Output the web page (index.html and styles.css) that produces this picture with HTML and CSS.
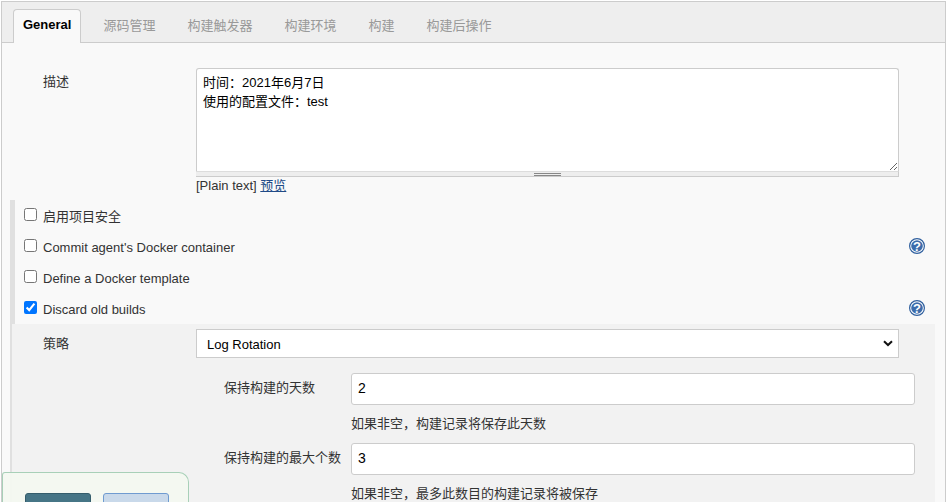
FILE: index.html
```html
<!DOCTYPE html>
<html lang="zh-CN">
<head>
<meta charset="utf-8">
<title>General</title>
<link rel="stylesheet" href="styles.css">
</head>
<body>
<div class="panel">
  <nav class="tabs">
    <a class="tab active">General</a>
    <a class="tab">源码管理</a>
    <a class="tab">构建触发器</a>
    <a class="tab">构建环境</a>
    <a class="tab">构建</a>
    <a class="tab">构建后操作</a>
  </nav>
  <div class="content">
    <div class="desc-row">
      <div class="label desc-label">描述</div>
      <div class="desc-field">
        <textarea class="desc-text">时间：2021年6月7日
使用的配置文件：test</textarea>
        <div class="grip"><span class="grip-mark"></span></div>
        <div class="format">[Plain text] <a class="preview">预览</a></div>
      </div>
    </div>
    <div class="section">
      <div class="check-row"><label class="check check-cjk"><input type="checkbox"><span>启用项目安全</span></label></div>
      <div class="check-row"><label class="check"><input type="checkbox"><span>Commit agent's Docker container</span></label>
        <svg class="help" viewBox="0 0 16 16"><circle cx="8" cy="8" r="7.4" fill="#fff" stroke="#2f5f9e" stroke-width="1.2"/><circle cx="8" cy="8" r="5.8" fill="#3c6cab"/><text x="8" y="12.5" class="help-q">?</text></svg>
      </div>
      <div class="check-row"><label class="check"><input type="checkbox"><span>Define a Docker template</span></label></div>
      <div class="check-row"><label class="check"><input type="checkbox" checked><span>Discard old builds</span></label>
        <svg class="help" viewBox="0 0 16 16"><circle cx="8" cy="8" r="7.4" fill="#fff" stroke="#2f5f9e" stroke-width="1.2"/><circle cx="8" cy="8" r="5.8" fill="#3c6cab"/><text x="8" y="12.5" class="help-q">?</text></svg>
      </div>
      <div class="nested">
        <div class="strategy-row">
          <div class="label strategy-label">策略</div>
          <div class="select-box">Log Rotation
            <svg class="chevron" viewBox="0 0 10 7"><path d="M1 1.2 5 5 9 1.2" fill="none" stroke="#111" stroke-width="2"/></svg>
          </div>
        </div>
        <div class="field-row">
          <div class="field-label">保持构建的天数</div>
          <div class="field-body">
            <div class="text-input">2</div>
            <div class="hint">如果非空，构建记录将保存此天数</div>
          </div>
        </div>
        <div class="field-row">
          <div class="field-label">保持构建的最大个数</div>
          <div class="field-body">
            <div class="text-input">3</div>
            <div class="hint">如果非空，最多此数目的构建记录将被保存</div>
          </div>
        </div>
      </div>
    </div>
  </div>
  <div class="footer">
    <button class="btn btn-save"></button>
    <button class="btn btn-apply"></button>
  </div>
</div>
</body>
</html>
```
FILE: styles.css
```css
* { box-sizing: border-box; }
html, body { margin: 0; height: 502px; overflow: hidden; background: #fff; }
body {
  font-family: "Liberation Sans", "Noto Sans CJK SC", sans-serif;
  font-size: 13px;
  color: #333;
}
.panel {
  position: relative;
  height: 501px;
  margin: 1px 1px 0 1px;
  border: 1px solid #ccc;
  border-bottom: 0;
  background: #f9f9f9;
  overflow: hidden;
}
.tabs {
  display: flex;
  align-items: flex-end;
  height: 41px;
  padding-left: 11px;
  background: #eee;
  border-bottom: 1px solid #ccc;
}
.tab {
  height: 30px;
  line-height: 28px;
  padding: 0 16px;
  color: #999;
  white-space: nowrap;
}
.tab.active {
  height: 34px;
  margin-right: 6px;
  margin-bottom: -1px;
  line-height: 30px;
  padding: 0 9px;
  color: #000;
  font-weight: 700;
  background: #f9f9f9;
  border: 1px solid #ccc;
  border-bottom: 0;
  border-radius: 4px 4px 0 0;
}
.content { padding: 25px 10px 0 8px; }
.desc-row { display: flex; padding-right: 36px; }
.label { color: #333; }
.desc-label { width: 186px; padding: 3px 0 0 33px; }
.desc-field { flex: 1; }
.desc-text {
  display: block;
  width: 100%;
  height: 103px;
  padding: 4px 6px;
  font: inherit;
  line-height: 19px;
  color: #000;
  background: #fff;
  border: 1px solid #ccc;
  border-bottom: 0;
  border-radius: 3px 3px 0 0;
  resize: vertical;
  outline: none;
}
.grip {
  display: flex;
  justify-content: center;
  align-items: center;
  height: 6px;
  background: #eee;
  border: 1px solid #ccc;
  border-top-color: #ddd;
  border-left: 0;
}
.grip-mark {
  width: 27px;
  height: 3px;
  border-top: 1px solid #888;
  border-bottom: 1px solid #888;
}
.format { margin-top: 1px; line-height: 16px; }
.preview { color: #204a87; text-decoration: underline; }
.section {
  margin-top: 6px;
  border-left: 5px solid #e0e0e0;
}
.check-row {
  display: flex;
  justify-content: space-between;
  align-items: center;
  height: 31px;
  padding: 0 10px 0 9px;
}
.check { display: flex; align-items: center; gap: 6px; }
.check input { width: 13px; height: 13px; margin: 0 0 2px; }
.check span { padding-top: 2px; }
.check-cjk span { padding-top: 0; }
.help { width: 16px; height: 16px; margin-top: -1px; }
.help-q {
  font-size: 13px;
  font-weight: 700;
  fill: #fff;
  text-anchor: middle;
}
.nested {
  margin-left: -3px;
  padding: 0 20px 0 32px;
  background: #f2f2f2;
  height: 200px;
}
.strategy-row { display: flex; padding-top: 5px; }
.strategy-label { width: 153px; padding: 4px 0 0 0; margin-left: -1px; }
.select-box {
  position: relative;
  width: 703px;
  height: 29px;
  line-height: 29px;
  padding-left: 10px;
  color: #000;
  background: #fff;
  border: 1px solid #ccc;
}
.chevron { position: absolute; right: 5px; top: 10px; width: 10px; height: 7px; }
.field-row { display: flex; margin-top: 15px; }
.field-row + .field-row { margin-top: 0; }
.field-label {
  width: 307px;
  padding: 4px 0 0 180px;
  white-space: nowrap;
}
.field-body { flex: 1; }
.text-input {
  height: 32px;
  line-height: 28px;
  padding-left: 6px;
  color: #000;
  font-size: 14px;
  background: #fff;
  border: 1px solid #ccc;
  border-radius: 3px;
}
.hint { height: 38px; padding-top: 8px; color: #333; }
.footer {
  position: absolute;
  left: 0;
  bottom: 0;
  width: 187px;
  height: 30px;
  padding: 20px 0 0 22px;
  display: flex;
  gap: 12px;
  background: rgba(244, 248, 241, 0.92);
  border: 1px solid #a8d0b8;
  border-bottom: 0;
  border-radius: 3px 10px 0 0;
}
.btn { width: 66px; height: 30px; padding: 0; border-radius: 3px; flex: none; }
.btn-save { background: #467586; border: 1px solid #355d6c; }
.btn-apply { background: #c9d9ea; border: 1px solid #6f9bd0; }
```
